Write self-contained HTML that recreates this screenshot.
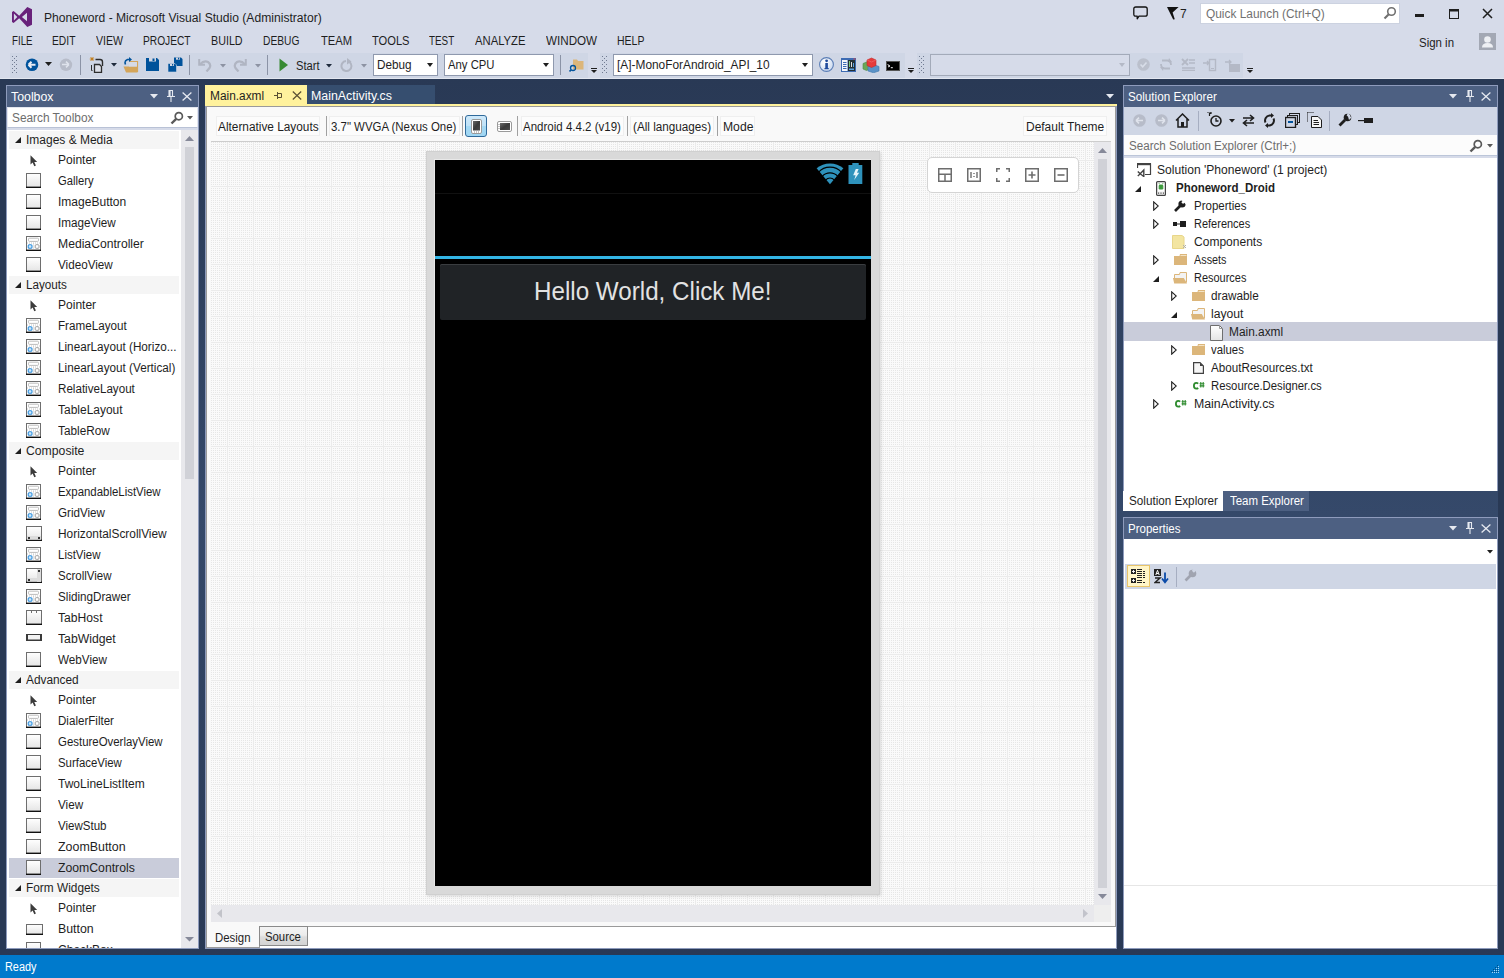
<!DOCTYPE html>
<html><head><meta charset="utf-8"><style>
html,body{margin:0;padding:0;width:1504px;height:978px;overflow:hidden;background:#293955;}
body{position:relative;font-family:"Liberation Sans", sans-serif;}
div{position:absolute;box-sizing:border-box;}
.t{position:absolute;font-family:"Liberation Sans", sans-serif;font-size:12px;line-height:16px;white-space:nowrap;}
</style></head><body>
<svg width="0" height="0" style="position:absolute"><defs><linearGradient id="gb" x1="0" y1="0" x2="0" y2="1"><stop offset="0" stop-color="#ffffff"/><stop offset="1" stop-color="#e4e4e4"/></linearGradient></defs></svg>
<div style="left:0px;top:0px;width:1504px;height:79px;background:#d6dbe9;"></div><div style="left:0px;top:78px;width:1504px;height:1px;background:#e3e7f0;"></div><div style="left:0px;top:79px;width:1504px;height:876px;background:#293955;"></div><div style="left:6px;top:79px;width:1492px;height:876px;background:linear-gradient(#293955 0%, #35496a 50%, #293955 100%);"></div><div style="left:0px;top:955px;width:1504px;height:23px;background:#007acc;"></div><svg style="position:absolute;left:12px;top:7px;" width="20" height="20" viewBox="0 0 20 20"><path d="M0 5 L1.6 4 L7.2 8.7 L15.3 0 L20 2.2 V17.8 L15.3 20 L7.2 11.3 L1.6 16 L0 15 Z M1.9 6.6 V13.4 L5.3 10 Z M9.9 10 L15 5.8 V14.2 Z" fill="#68217a" fill-rule="evenodd"/></svg><span class="t" style="left:44.3px;top:10px;color:#1e1e1e;transform:scaleX(1.0091);transform-origin:0 0;">Phoneword - Microsoft Visual Studio (Administrator)</span><span class="t" style="left:11.5px;top:33px;color:#1e1e1e;transform:scaleX(0.8094);transform-origin:0 0;">FILE</span><span class="t" style="left:52px;top:33px;color:#1e1e1e;transform:scaleX(0.8563);transform-origin:0 0;">EDIT</span><span class="t" style="left:95.7px;top:33px;color:#1e1e1e;transform:scaleX(0.8840);transform-origin:0 0;">VIEW</span><span class="t" style="left:143px;top:33px;color:#1e1e1e;transform:scaleX(0.8500);transform-origin:0 0;">PROJECT</span><span class="t" style="left:210.9px;top:33px;color:#1e1e1e;transform:scaleX(0.8941);transform-origin:0 0;">BUILD</span><span class="t" style="left:263.3px;top:33px;color:#1e1e1e;transform:scaleX(0.8530);transform-origin:0 0;">DEBUG</span><span class="t" style="left:320.5px;top:33px;color:#1e1e1e;transform:scaleX(0.9331);transform-origin:0 0;">TEAM</span><span class="t" style="left:371.8px;top:33px;color:#1e1e1e;transform:scaleX(0.9274);transform-origin:0 0;">TOOLS</span><span class="t" style="left:429.3px;top:33px;color:#1e1e1e;transform:scaleX(0.8220);transform-origin:0 0;">TEST</span><span class="t" style="left:475px;top:33px;color:#1e1e1e;transform:scaleX(0.9390);transform-origin:0 0;">ANALYZE</span><span class="t" style="left:545.7px;top:33px;color:#1e1e1e;transform:scaleX(0.9704);transform-origin:0 0;">WINDOW</span><span class="t" style="left:617.3px;top:33px;color:#1e1e1e;transform:scaleX(0.8742);transform-origin:0 0;">HELP</span><svg style="position:absolute;left:1133px;top:6px;" width="16" height="15" viewBox="0 0 16 15"><path d="M2.8 1 H12.2 Q14.2 1 14.2 3 V8.2 Q14.2 10.2 12.2 10.2 H6 L4.2 12.8 V10.2 H2.8 Q0.8 10.2 0.8 8.2 V3 Q0.8 1 2.8 1 Z" fill="none" stroke="#111" stroke-width="1.3" stroke-linejoin="round"/></svg><svg style="position:absolute;left:1167px;top:7px;" width="13" height="13" viewBox="0 0 13 13"><path d="M0 0 H11.6 L5.6 5.6 L7.8 12.3 L6.2 12.6 Z" fill="#111"/></svg><span class="t" style="left:1180px;top:6px;color:#1e1e1e;font-size:12px">7</span><div style="left:1200px;top:3px;width:200px;height:21px;background:#ffffff;border:1px solid #ccd2e0;"></div><span class="t" style="left:1205.5px;top:6px;color:#717171;transform:scaleX(0.9916);transform-origin:0 0;">Quick Launch (Ctrl+Q)</span><svg style="position:absolute;left:1383px;top:6px;" width="14" height="14" viewBox="0 0 14 14"><circle cx="8.5" cy="5.5" r="3.8" fill="none" stroke="#717171" stroke-width="1.6"/><path d="M6 8 L1.5 12.5" stroke="#717171" stroke-width="2.2"/></svg><div style="left:1415px;top:14px;width:9px;height:3px;background:#1e1e1e;"></div><svg style="position:absolute;left:1449px;top:9px;" width="10" height="10" viewBox="0 0 10 10"><rect x="0.5" y="0.5" width="9" height="9" fill="none" stroke="#1e1e1e" stroke-width="1"/><rect x="0" y="0" width="10" height="2.5" fill="#1e1e1e"/></svg><svg style="position:absolute;left:1482px;top:8px;" width="11" height="11" viewBox="0 0 11 11"><path d="M1 1 L10 10 M10 1 L1 10" stroke="#1e1e1e" stroke-width="1.5"/></svg><span class="t" style="left:1419px;top:35px;color:#1e1e1e;transform:scaleX(0.9540);transform-origin:0 0;">Sign in</span><div style="left:1479px;top:33px;width:17px;height:17px;background:#a3a8b4;"></div><svg style="position:absolute;left:1479px;top:33px;" width="17" height="17" viewBox="0 0 17 17"><circle cx="8.5" cy="6.5" r="3.3" fill="#eef0f4"/><path d="M3 14.5 Q3 10 8.5 10 Q14 10 14 14.5 Z" fill="#eef0f4"/></svg><div style="left:10px;top:53px;width:1246px;height:25px;background:#cfd6e5;"></div><svg style="position:absolute;left:12px;top:56px;" width="5" height="17" viewBox="0 0 5 17"><rect x="0" y="0" width="1" height="1" fill="#6f7a91"/><rect x="4" y="0" width="1" height="1" fill="#6f7a91"/><rect x="2" y="2" width="1" height="1" fill="#6f7a91"/><rect x="0" y="4" width="1" height="1" fill="#6f7a91"/><rect x="4" y="4" width="1" height="1" fill="#6f7a91"/><rect x="2" y="6" width="1" height="1" fill="#6f7a91"/><rect x="0" y="8" width="1" height="1" fill="#6f7a91"/><rect x="4" y="8" width="1" height="1" fill="#6f7a91"/><rect x="2" y="10" width="1" height="1" fill="#6f7a91"/><rect x="0" y="12" width="1" height="1" fill="#6f7a91"/><rect x="4" y="12" width="1" height="1" fill="#6f7a91"/><rect x="2" y="14" width="1" height="1" fill="#6f7a91"/><rect x="0" y="16" width="1" height="1" fill="#6f7a91"/><rect x="4" y="16" width="1" height="1" fill="#6f7a91"/></svg><div style="left:80px;top:55px;width:1px;height:20px;background:#8b93a6;"></div><div style="left:189px;top:55px;width:1px;height:20px;background:#8b93a6;"></div><div style="left:267px;top:55px;width:1px;height:20px;background:#8b93a6;"></div><svg style="position:absolute;left:25px;top:58px;" width="14" height="14" viewBox="0 0 14 14"><circle cx="7" cy="6.8" r="6.3" fill="#00539c"/><path d="M3.5 6.8 H10.5 M3.5 6.8 L6.5 3.8 M3.5 6.8 L6.5 9.8" stroke="#e8ecf4" stroke-width="2" fill="none"/></svg><svg style="position:absolute;left:45px;top:62px;" width="7" height="4" viewBox="0 0 7 4"><path d="M0 0 H7 L3.5 4 Z" fill="#1e1e1e"/></svg><svg style="position:absolute;left:59px;top:58px;" width="14" height="14" viewBox="0 0 14 14"><circle cx="7" cy="6.8" r="6.2" fill="#b7bcc9"/><path d="M10 6.5 H3 M10 6.5 L7 3.6 M10 6.5 L7 9.4" stroke="#dfe3ec" stroke-width="1.6" fill="none"/></svg><svg style="position:absolute;left:89px;top:57px;" width="16" height="16" viewBox="0 0 16 16"><path d="M1.5 0.5 L4.5 3.5 M4.5 0.5 L1.5 3.5 M3 0 V4 M0.8 2 H5.2" stroke="#c27d1a" stroke-width="0.9"/><path d="M6.5 2.5 H11 Q13.5 2.5 13.5 5 V9" fill="none" stroke="#2d2d2d" stroke-width="1.4"/><path d="M5.5 7.5 H10.5 L12.5 9.5 V15.5 H5.5 Z" fill="#dcdfe8" stroke="#2d2d2d" stroke-width="1.3"/><path d="M2.5 8 V13.5 H3.5" fill="none" stroke="#2d2d2d" stroke-width="1"/></svg><svg style="position:absolute;left:111px;top:63px;" width="6" height="4" viewBox="0 0 6 4"><path d="M0 0 H6 L3 3.5 Z" fill="#1e2a3c"/></svg><svg style="position:absolute;left:123px;top:57px;" width="16" height="16" viewBox="0 0 16 16"><path d="M0.5 9.5 H14.5 V15.5 H3 Z" fill="#d4a55a"/><path d="M6.5 4.5 H14.5 V15" fill="none" stroke="#d4a55a" stroke-width="1.2"/><rect x="6" y="5" width="8" height="4.5" fill="#d6dae6"/><path d="M2.5 7.5 Q1 4 4.5 2.5 H7" fill="none" stroke="#00539c" stroke-width="1.6"/><path d="M6 0 L9 2.5 L6 5 Z" fill="#00539c"/></svg><svg style="position:absolute;left:146px;top:58px;" width="13" height="13" viewBox="0 0 13 13"><path d="M0 0 H11 L13 2 V13 H0 Z" fill="#00529b"/><rect x="3" y="0" width="7" height="3.5" fill="#d2d6e2"/><rect x="6.5" y="0.5" width="2" height="2.5" fill="#00529b"/></svg><svg style="position:absolute;left:167px;top:57px;" width="16" height="16" viewBox="0 0 16 16"><path d="M7 0.5 H14 L15.5 2 V9 H7 Z" fill="#00529b"/><rect x="9" y="0.5" width="4" height="2.2" fill="#d2d6e2"/><rect x="11" y="0.8" width="1.2" height="1.6" fill="#00529b"/><path d="M6.5 8 L7.5 7" stroke="#d2d6e2"/><path d="M1 6.5 H8 L9.5 8 V15 H1 Z" fill="#00529b" stroke="#cfd6e5" stroke-width="0.6"/><rect x="3" y="6.8" width="4" height="2.2" fill="#d2d6e2"/><rect x="5" y="7" width="1.2" height="1.6" fill="#00529b"/></svg><svg style="position:absolute;left:198px;top:58px;" width="14" height="14" viewBox="0 0 14 14"><path d="M1.2 1 V6.8 H7" stroke="#b0b5c2" stroke-width="2" fill="none"/><path d="M1.8 6.5 Q6 2 10 4 Q13.5 6.5 11.5 10 L8.5 13.5" stroke="#b0b5c2" stroke-width="2.2" fill="none"/></svg><svg style="position:absolute;left:220px;top:64px;" width="6" height="4" viewBox="0 0 6 4"><path d="M0 0 H6 L3 3.5 Z" fill="#8d93a3"/></svg><svg style="position:absolute;left:233px;top:58px;" width="14" height="14" viewBox="0 0 14 14"><path d="M12.8 1 V6.8 H7" stroke="#b0b5c2" stroke-width="2" fill="none"/><path d="M12.2 6.5 Q8 2 4 4 Q0.5 6.5 2.5 10 L5.5 13.5" stroke="#b0b5c2" stroke-width="2.2" fill="none"/></svg><svg style="position:absolute;left:255px;top:64px;" width="6" height="4" viewBox="0 0 6 4"><path d="M0 0 H6 L3 3.5 Z" fill="#8d93a3"/></svg><svg style="position:absolute;left:279px;top:58px;" width="10" height="14" viewBox="0 0 10 14"><path d="M0.5 0.5 L9 7 L0.5 13.5 Z" fill="#388a34"/></svg><span class="t" style="left:296px;top:58px;color:#1e1e1e;transform:scaleX(0.9318);transform-origin:0 0;">Start</span><svg style="position:absolute;left:326px;top:64px;" width="6" height="4" viewBox="0 0 6 4"><path d="M0 0 H6 L3 3.5 Z" fill="#1e2a3c"/></svg><svg style="position:absolute;left:340px;top:58px;" width="13" height="14" viewBox="0 0 13 14"><path d="M9.5 4 A5 5 0 1 1 6 3" stroke="#b0b5c2" stroke-width="2" fill="none"/><path d="M7 0 L11.5 3.5 L7 6.5 Z" fill="#b0b5c2"/></svg><svg style="position:absolute;left:361px;top:64px;" width="6" height="4" viewBox="0 0 6 4"><path d="M0 0 H6 L3 3.5 Z" fill="#8d93a3"/></svg><div style="left:373px;top:54px;width:65px;height:22px;background:#ffffff;border:1px solid #8f99ae;"></div><span class="t" style="left:377.2px;top:57px;color:#1e1e1e;transform:scaleX(0.9785);transform-origin:0 0;">Debug</span><svg style="position:absolute;left:427px;top:63px;" width="6" height="4" viewBox="0 0 6 4"><path d="M0 0 H6 L3 4 Z" fill="#1e1e1e"/></svg><div style="left:444px;top:54px;width:110px;height:22px;background:#ffffff;border:1px solid #8f99ae;"></div><span class="t" style="left:448.2px;top:57px;color:#1e1e1e;transform:scaleX(0.9424);transform-origin:0 0;">Any CPU</span><svg style="position:absolute;left:543px;top:63px;" width="6" height="4" viewBox="0 0 6 4"><path d="M0 0 H6 L3 4 Z" fill="#1e1e1e"/></svg><div style="left:560px;top:55px;width:1px;height:20px;background:#8b93a6;"></div><div style="left:588px;top:53px;width:12px;height:25px;background:#d6dbe9;"></div><svg style="position:absolute;left:569px;top:58px;" width="16" height="15" viewBox="0 0 16 15"><path d="M4 1.5 H8 L9 3 H14.5 V11.5 H4 Z" fill="#dcb67a"/><circle cx="4" cy="10" r="2.5" fill="none" stroke="#00539c" stroke-width="1.3"/><path d="M2.3 11.7 L0.5 13.5" stroke="#00539c" stroke-width="1.6"/></svg><svg style="position:absolute;left:591px;top:68px;" width="6" height="6" viewBox="0 0 6 6"><rect x="0" y="0" width="6" height="1" fill="#1e1e1e"/><path d="M0 2 H6 L3 5 Z" fill="#1e1e1e"/></svg><svg style="position:absolute;left:602px;top:56px;" width="5" height="17" viewBox="0 0 5 17"><rect x="0" y="0" width="1" height="1" fill="#6f7a91"/><rect x="4" y="0" width="1" height="1" fill="#6f7a91"/><rect x="2" y="2" width="1" height="1" fill="#6f7a91"/><rect x="0" y="4" width="1" height="1" fill="#6f7a91"/><rect x="4" y="4" width="1" height="1" fill="#6f7a91"/><rect x="2" y="6" width="1" height="1" fill="#6f7a91"/><rect x="0" y="8" width="1" height="1" fill="#6f7a91"/><rect x="4" y="8" width="1" height="1" fill="#6f7a91"/><rect x="2" y="10" width="1" height="1" fill="#6f7a91"/><rect x="0" y="12" width="1" height="1" fill="#6f7a91"/><rect x="4" y="12" width="1" height="1" fill="#6f7a91"/><rect x="2" y="14" width="1" height="1" fill="#6f7a91"/><rect x="0" y="16" width="1" height="1" fill="#6f7a91"/><rect x="4" y="16" width="1" height="1" fill="#6f7a91"/></svg><div style="left:613px;top:54px;width:200px;height:22px;background:#ffffff;border:1px solid #8f99ae;"></div><span class="t" style="left:617.2px;top:57px;color:#1e1e1e;transform:scaleX(0.9900);transform-origin:0 0;">[A]-MonoForAndroid_API_10</span><svg style="position:absolute;left:802px;top:63px;" width="6" height="4" viewBox="0 0 6 4"><path d="M0 0 H6 L3 4 Z" fill="#1e1e1e"/></svg><svg style="position:absolute;left:819px;top:57px;" width="15" height="15" viewBox="0 0 15 15"><defs><radialGradient id="ig" cx="0.35" cy="0.3" r="0.8"><stop offset="0" stop-color="#ffffff"/><stop offset="1" stop-color="#c9d8ef"/></radialGradient></defs><circle cx="7.5" cy="7.5" r="6.9" fill="url(#ig)" stroke="#5a7db5" stroke-width="1.1"/><rect x="6.3" y="6" width="2.6" height="6" fill="#1f4a9c"/><rect x="5.5" y="11" width="4.2" height="1.2" fill="#1f4a9c"/><circle cx="7.6" cy="3.8" r="1.4" fill="#1f4a9c"/></svg><svg style="position:absolute;left:841px;top:58px;" width="15" height="14" viewBox="0 0 15 14"><rect x="0" y="0" width="15" height="14" fill="#3d6bb3"/><rect x="1" y="2" width="5.5" height="11" fill="#f4f6fa"/><rect x="7" y="2" width="7" height="11" fill="#243036"/><path d="M2 4.5 H5.5 M2 6.5 H5.5 M2 8.5 H5.5 M2 10.5 H5.5" stroke="#3d6bb3" stroke-width="1"/><rect x="8" y="3" width="1" height="6" fill="#7bc67b"/><rect x="10" y="4" width="1" height="5" fill="#e0e0e0"/><rect x="12" y="5" width="1" height="4" fill="#5aa0e0"/><rect x="8" y="10.5" width="5" height="1.5" fill="#5aa0e0"/><rect x="12.5" y="0.5" width="2" height="1" fill="#e04040"/></svg><svg style="position:absolute;left:862px;top:57px;" width="18" height="16" viewBox="0 0 18 16"><path d="M1 6.5 L4.5 5 L8 6.5 V12 L4.5 13.5 L1 12 Z" fill="#6aa85a" stroke="#4e8a44" stroke-width="0.6"/><path d="M6 9.5 L11.5 7.5 L17 9.5 V14 L11.5 15.8 L6 14 Z" fill="#5b93c8" stroke="#3f78ad" stroke-width="0.6"/><path d="M5 3 L9.5 1 L14 3 V8.5 L9.5 10.5 L5 8.5 Z" fill="#e63b3b" stroke="#c22a2a" stroke-width="0.6"/><path d="M5 3 L9.5 5 L14 3" fill="none" stroke="#f07070" stroke-width="0.6"/></svg><svg style="position:absolute;left:886px;top:61px;" width="14" height="10" viewBox="0 0 14 10"><rect x="0.5" y="0.5" width="13" height="9" fill="#000" stroke="#555"/><path d="M2 4 L4 5 L2 6" stroke="#fff" stroke-width="0.9" fill="none"/><rect x="4.8" y="6.2" width="2" height="1" fill="#fff"/><rect x="1.5" y="3.2" width="0.8" height="0.8" fill="#fff"/></svg><div style="left:905px;top:53px;width:12px;height:25px;background:#d6dbe9;"></div><svg style="position:absolute;left:908px;top:68px;" width="6" height="6" viewBox="0 0 6 6"><rect x="0" y="0" width="6" height="1" fill="#1e1e1e"/><path d="M0 2 H6 L3 5 Z" fill="#1e1e1e"/></svg><svg style="position:absolute;left:919px;top:56px;" width="5" height="17" viewBox="0 0 5 17"><rect x="0" y="0" width="1" height="1" fill="#6f7a91"/><rect x="4" y="0" width="1" height="1" fill="#6f7a91"/><rect x="2" y="2" width="1" height="1" fill="#6f7a91"/><rect x="0" y="4" width="1" height="1" fill="#6f7a91"/><rect x="4" y="4" width="1" height="1" fill="#6f7a91"/><rect x="2" y="6" width="1" height="1" fill="#6f7a91"/><rect x="0" y="8" width="1" height="1" fill="#6f7a91"/><rect x="4" y="8" width="1" height="1" fill="#6f7a91"/><rect x="2" y="10" width="1" height="1" fill="#6f7a91"/><rect x="0" y="12" width="1" height="1" fill="#6f7a91"/><rect x="4" y="12" width="1" height="1" fill="#6f7a91"/><rect x="2" y="14" width="1" height="1" fill="#6f7a91"/><rect x="0" y="16" width="1" height="1" fill="#6f7a91"/><rect x="4" y="16" width="1" height="1" fill="#6f7a91"/></svg><div style="left:930px;top:54px;width:200px;height:22px;background:#d6dbe9;border:1px solid #a3aab9;"></div><svg style="position:absolute;left:1119px;top:63px;" width="6" height="4" viewBox="0 0 6 4"><path d="M0 0 H6 L3 4 Z" fill="#b4b9c6"/></svg><svg style="position:absolute;left:1137px;top:58px;" width="13" height="13" viewBox="0 0 13 13"><circle cx="6.5" cy="6.5" r="6.3" fill="#bbc0cc"/><path d="M3.5 6.5 L5.7 8.8 L9.5 4.5" stroke="#d8dde8" stroke-width="1.6" fill="none"/></svg><svg style="position:absolute;left:1159px;top:58px;" width="14" height="13" viewBox="0 0 14 13"><path d="M3 2.5 H8 Q12 2.5 12 7 M11 10.5 H6 Q2 10.5 2 6" stroke="#b4b9c6" stroke-width="1.8" fill="none"/><path d="M10 0 L13 4 L9 4Z M4 13 L1 9 L5 9 Z" fill="#b4b9c6"/></svg><svg style="position:absolute;left:1181px;top:58px;" width="14" height="13" viewBox="0 0 14 13"><path d="M1 1 L7 7 M7 1 L1 7" stroke="#b4b9c6" stroke-width="1.8"/><path d="M8 2 H14 M8 5 H14 M1 10 H14 M1 12.5 H14" stroke="#b4b9c6" stroke-width="1.6"/></svg><svg style="position:absolute;left:1203px;top:57px;" width="14" height="15" viewBox="0 0 14 15"><rect x="6.5" y="2.5" width="6" height="11" fill="none" stroke="#b4b9c6" stroke-width="1.4"/><path d="M0 6 H6 M4 4 L6 6 L4 8" stroke="#b4b9c6" stroke-width="1.3" fill="none"/><rect x="8" y="11" width="3" height="1" fill="#b4b9c6"/></svg><svg style="position:absolute;left:1225px;top:57px;" width="15" height="15" viewBox="0 0 15 15"><rect x="4" y="7" width="11" height="8" fill="#b4b9c6"/><path d="M0 5 H6 M4 3 L6 5 L4 7" stroke="#b4b9c6" stroke-width="1.3" fill="none"/></svg><div style="left:1243px;top:53px;width:13px;height:25px;background:#d6dbe9;"></div><svg style="position:absolute;left:1247px;top:68px;" width="6" height="6" viewBox="0 0 6 6"><rect x="0" y="0" width="6" height="1" fill="#1e1e1e"/><path d="M0 2 H6 L3 5 Z" fill="#1e1e1e"/></svg><div style="left:6px;top:85px;width:193px;height:864px;background:#8e9bbc;"></div><div style="left:6px;top:85px;width:193px;height:1px;background:#8e9bbc;"></div><div style="left:7px;top:86px;width:191px;height:21px;background:#4d6082;"></div><span class="t" style="left:11.2px;top:89px;color:#ffffff;transform:scaleX(1.0276);transform-origin:0 0;">Toolbox</span><svg style="position:absolute;left:150px;top:94px;" width="8" height="5" viewBox="0 0 8 5"><path d="M0 0 H8 L4 4.5 Z" fill="#e6e9f0"/></svg><svg style="position:absolute;left:167px;top:90px;" width="8" height="12" viewBox="0 0 8 12"><path d="M2 0.5 V6.5 M1.5 0.5 H6 M5.5 0.5 V6.5 M0 6.5 H8 M4 6.5 V12" stroke="#e6e9f0" stroke-width="1.1" fill="none"/><rect x="2" y="1" width="1.6" height="5.5" fill="#e6e9f0"/></svg><svg style="position:absolute;left:182px;top:92px;" width="10" height="9" viewBox="0 0 10 9"><path d="M0.6 0.6 L9.4 8.4 M9.4 0.6 L0.6 8.4" stroke="#e6e9f0" stroke-width="1.3"/></svg><div style="left:7px;top:107px;width:191px;height:841px;background:#ffffff;"></div><div style="left:7px;top:107px;width:191px;height:21px;background:#ffffff;border:1px solid #e3e6ef;border-bottom-color:#b9c2d6;"></div><span class="t" style="left:11.8px;top:110px;color:#6d6d6d;transform:scaleX(0.9869);transform-origin:0 0;">Search Toolbox</span><svg style="position:absolute;left:170px;top:111px;" width="14" height="14" viewBox="0 0 14 14"><circle cx="8.8" cy="5.2" r="3.6" fill="none" stroke="#595959" stroke-width="1.7"/><path d="M6.2 7.8 L1.5 12.5" stroke="#595959" stroke-width="2.4"/></svg><svg style="position:absolute;left:187px;top:116px;" width="6" height="4" viewBox="0 0 6 4"><path d="M0 0 H6 L3 3.5 Z" fill="#595959"/></svg><div style="left:7px;top:128px;width:191px;height:2px;background:#d6dbe9;"></div><div style="left:181px;top:130px;width:17px;height:818px;background:#e8e8ec;"></div><svg style="position:absolute;left:185px;top:136px;" width="9" height="5" viewBox="0 0 9 5"><path d="M0 5 L4.5 0 L9 5 Z" fill="#868999"/></svg><div style="left:185px;top:147px;width:9px;height:332px;background:#d0d1d7;"></div><svg style="position:absolute;left:185px;top:937px;" width="9" height="5" viewBox="0 0 9 5"><path d="M0 0 L4.5 4.5 L9 0 Z" fill="#868999"/></svg><div style="left:7px;top:130px;width:174px;height:818px;overflow:hidden;"><div style="left:2px;top:1px;width:170px;height:18px;background:#f5f5f5"></div><svg style="position:absolute;left:8px;top:7px" width="6" height="6"><path d="M6 0 V6 H0 Z" fill="#1e1e1e"/></svg><span class="t" style="left:18.8px;top:2px;color:#1e1e1e;transform:scaleX(0.9990);transform-origin:0 0;">Images &amp; Media</span><svg style="position:absolute;left:23px;top:25px;" width="9" height="12" viewBox="0 0 9 12"><path d="M0.5 0.3 V9.5 L2.6 7.6 L4.3 11.3 L5.9 10.6 L4.3 7 L7.2 7 Z" fill="#3c3c3c"/></svg><span class="t" style="left:51.1px;top:22px;color:#1e1e1e;transform:scaleX(1.0022);transform-origin:0 0;">Pointer</span><svg style="position:absolute;left:19px;top:43px;" width="15" height="15" viewBox="0 0 15 15"><rect x="0.5" y="0.5" width="14" height="14" fill="url(#gb)" stroke="#6e6e6e"/><rect x="0" y="13.6" width="15" height="1.4" fill="#111"/></svg><span class="t" style="left:51.1px;top:43px;color:#1e1e1e;transform:scaleX(0.9365);transform-origin:0 0;">Gallery</span><svg style="position:absolute;left:19px;top:64px;" width="15" height="15" viewBox="0 0 15 15"><rect x="0.5" y="0.5" width="14" height="14" fill="url(#gb)" stroke="#6e6e6e"/><rect x="0" y="13.6" width="15" height="1.4" fill="#111"/></svg><span class="t" style="left:51.1px;top:64px;color:#1e1e1e;transform:scaleX(1.0027);transform-origin:0 0;">ImageButton</span><svg style="position:absolute;left:19px;top:85px;" width="15" height="15" viewBox="0 0 15 15"><rect x="0.5" y="0.5" width="14" height="14" fill="url(#gb)" stroke="#6e6e6e"/><rect x="0" y="13.6" width="15" height="1.4" fill="#111"/></svg><span class="t" style="left:51.1px;top:85px;color:#1e1e1e;transform:scaleX(0.9756);transform-origin:0 0;">ImageView</span><svg style="position:absolute;left:19px;top:106px;" width="15" height="15" viewBox="0 0 15 15"><rect x="0.5" y="0.5" width="14" height="14" fill="#fff" stroke="#6e6e6e"/><rect x="0" y="13.6" width="15" height="1.4" fill="#111"/><rect x="2.5" y="2.2" width="10" height="3.2" rx="1" fill="#fff" stroke="#b4b4b4" stroke-width="0.9"/><path d="M1 7 H14" stroke="#b8b8b8" stroke-width="0.8" stroke-dasharray="1 1"/><path d="M7.5 7.5 V13" stroke="#b8b8b8" stroke-width="0.8" stroke-dasharray="1 1"/><rect x="2.2" y="8.7" width="3.8" height="3.6" rx="1" fill="#cfe8fb" stroke="#2f8fdc" stroke-width="1.1"/><rect x="9.2" y="8.7" width="3.8" height="3.6" rx="1" fill="#fff" stroke="#9a9a9a" stroke-width="1"/></svg><span class="t" style="left:51.1px;top:106px;color:#1e1e1e;transform:scaleX(1.0139);transform-origin:0 0;">MediaController</span><svg style="position:absolute;left:19px;top:127px;" width="15" height="15" viewBox="0 0 15 15"><rect x="0.5" y="0.5" width="14" height="14" fill="url(#gb)" stroke="#6e6e6e"/><rect x="0" y="13.6" width="15" height="1.4" fill="#111"/></svg><span class="t" style="left:51.1px;top:127px;color:#1e1e1e;transform:scaleX(0.9740);transform-origin:0 0;">VideoView</span><div style="left:2px;top:146px;width:170px;height:18px;background:#f5f5f5"></div><svg style="position:absolute;left:8px;top:152px" width="6" height="6"><path d="M6 0 V6 H0 Z" fill="#1e1e1e"/></svg><span class="t" style="left:18.8px;top:147px;color:#1e1e1e;transform:scaleX(0.9734);transform-origin:0 0;">Layouts</span><svg style="position:absolute;left:23px;top:170px;" width="9" height="12" viewBox="0 0 9 12"><path d="M0.5 0.3 V9.5 L2.6 7.6 L4.3 11.3 L5.9 10.6 L4.3 7 L7.2 7 Z" fill="#3c3c3c"/></svg><span class="t" style="left:51.1px;top:167px;color:#1e1e1e;transform:scaleX(1.0022);transform-origin:0 0;">Pointer</span><svg style="position:absolute;left:19px;top:188px;" width="15" height="15" viewBox="0 0 15 15"><rect x="0.5" y="0.5" width="14" height="14" fill="#fff" stroke="#6e6e6e"/><rect x="0" y="13.6" width="15" height="1.4" fill="#111"/><rect x="2.5" y="2.2" width="10" height="3.2" rx="1" fill="#fff" stroke="#b4b4b4" stroke-width="0.9"/><path d="M1 7 H14" stroke="#b8b8b8" stroke-width="0.8" stroke-dasharray="1 1"/><path d="M7.5 7.5 V13" stroke="#b8b8b8" stroke-width="0.8" stroke-dasharray="1 1"/><rect x="2.2" y="8.7" width="3.8" height="3.6" rx="1" fill="#cfe8fb" stroke="#2f8fdc" stroke-width="1.1"/><rect x="9.2" y="8.7" width="3.8" height="3.6" rx="1" fill="#fff" stroke="#9a9a9a" stroke-width="1"/></svg><span class="t" style="left:51.1px;top:188px;color:#1e1e1e;transform:scaleX(0.9719);transform-origin:0 0;">FrameLayout</span><svg style="position:absolute;left:19px;top:209px;" width="15" height="15" viewBox="0 0 15 15"><rect x="0.5" y="0.5" width="14" height="14" fill="#fff" stroke="#6e6e6e"/><rect x="0" y="13.6" width="15" height="1.4" fill="#111"/><rect x="2.5" y="2.2" width="10" height="3.2" rx="1" fill="#fff" stroke="#b4b4b4" stroke-width="0.9"/><path d="M1 7 H14" stroke="#b8b8b8" stroke-width="0.8" stroke-dasharray="1 1"/><path d="M7.5 7.5 V13" stroke="#b8b8b8" stroke-width="0.8" stroke-dasharray="1 1"/><rect x="2.2" y="8.7" width="3.8" height="3.6" rx="1" fill="#cfe8fb" stroke="#2f8fdc" stroke-width="1.1"/><rect x="9.2" y="8.7" width="3.8" height="3.6" rx="1" fill="#fff" stroke="#9a9a9a" stroke-width="1"/></svg><span class="t" style="left:51.1px;top:209px;color:#1e1e1e;transform:scaleX(0.9763);transform-origin:0 0;">LinearLayout (Horizo...</span><svg style="position:absolute;left:19px;top:230px;" width="15" height="15" viewBox="0 0 15 15"><rect x="0.5" y="0.5" width="14" height="14" fill="#fff" stroke="#6e6e6e"/><rect x="0" y="13.6" width="15" height="1.4" fill="#111"/><rect x="2.5" y="2.2" width="10" height="3.2" rx="1" fill="#fff" stroke="#b4b4b4" stroke-width="0.9"/><path d="M1 7 H14" stroke="#b8b8b8" stroke-width="0.8" stroke-dasharray="1 1"/><path d="M7.5 7.5 V13" stroke="#b8b8b8" stroke-width="0.8" stroke-dasharray="1 1"/><rect x="2.2" y="8.7" width="3.8" height="3.6" rx="1" fill="#cfe8fb" stroke="#2f8fdc" stroke-width="1.1"/><rect x="9.2" y="8.7" width="3.8" height="3.6" rx="1" fill="#fff" stroke="#9a9a9a" stroke-width="1"/></svg><span class="t" style="left:51.1px;top:230px;color:#1e1e1e;transform:scaleX(0.9770);transform-origin:0 0;">LinearLayout (Vertical)</span><svg style="position:absolute;left:19px;top:251px;" width="15" height="15" viewBox="0 0 15 15"><rect x="0.5" y="0.5" width="14" height="14" fill="#fff" stroke="#6e6e6e"/><rect x="0" y="13.6" width="15" height="1.4" fill="#111"/><rect x="2.5" y="2.2" width="10" height="3.2" rx="1" fill="#fff" stroke="#b4b4b4" stroke-width="0.9"/><path d="M1 7 H14" stroke="#b8b8b8" stroke-width="0.8" stroke-dasharray="1 1"/><path d="M7.5 7.5 V13" stroke="#b8b8b8" stroke-width="0.8" stroke-dasharray="1 1"/><rect x="2.2" y="8.7" width="3.8" height="3.6" rx="1" fill="#cfe8fb" stroke="#2f8fdc" stroke-width="1.1"/><rect x="9.2" y="8.7" width="3.8" height="3.6" rx="1" fill="#fff" stroke="#9a9a9a" stroke-width="1"/></svg><span class="t" style="left:51.1px;top:251px;color:#1e1e1e;transform:scaleX(0.9676);transform-origin:0 0;">RelativeLayout</span><svg style="position:absolute;left:19px;top:272px;" width="15" height="15" viewBox="0 0 15 15"><rect x="0.5" y="0.5" width="14" height="14" fill="#fff" stroke="#6e6e6e"/><rect x="0" y="13.6" width="15" height="1.4" fill="#111"/><rect x="2.5" y="2.2" width="10" height="3.2" rx="1" fill="#fff" stroke="#b4b4b4" stroke-width="0.9"/><path d="M1 7 H14" stroke="#b8b8b8" stroke-width="0.8" stroke-dasharray="1 1"/><path d="M7.5 7.5 V13" stroke="#b8b8b8" stroke-width="0.8" stroke-dasharray="1 1"/><rect x="2.2" y="8.7" width="3.8" height="3.6" rx="1" fill="#cfe8fb" stroke="#2f8fdc" stroke-width="1.1"/><rect x="9.2" y="8.7" width="3.8" height="3.6" rx="1" fill="#fff" stroke="#9a9a9a" stroke-width="1"/></svg><span class="t" style="left:51.1px;top:272px;color:#1e1e1e;transform:scaleX(0.9984);transform-origin:0 0;">TableLayout</span><svg style="position:absolute;left:19px;top:293px;" width="15" height="15" viewBox="0 0 15 15"><rect x="0.5" y="0.5" width="14" height="14" fill="#fff" stroke="#6e6e6e"/><rect x="0" y="13.6" width="15" height="1.4" fill="#111"/><rect x="2.5" y="2.2" width="10" height="3.2" rx="1" fill="#fff" stroke="#b4b4b4" stroke-width="0.9"/><path d="M1 7 H14" stroke="#b8b8b8" stroke-width="0.8" stroke-dasharray="1 1"/><path d="M7.5 7.5 V13" stroke="#b8b8b8" stroke-width="0.8" stroke-dasharray="1 1"/><rect x="2.2" y="8.7" width="3.8" height="3.6" rx="1" fill="#cfe8fb" stroke="#2f8fdc" stroke-width="1.1"/><rect x="9.2" y="8.7" width="3.8" height="3.6" rx="1" fill="#fff" stroke="#9a9a9a" stroke-width="1"/></svg><span class="t" style="left:51.1px;top:293px;color:#1e1e1e;transform:scaleX(0.9829);transform-origin:0 0;">TableRow</span><div style="left:2px;top:312px;width:170px;height:18px;background:#f5f5f5"></div><svg style="position:absolute;left:8px;top:318px" width="6" height="6"><path d="M6 0 V6 H0 Z" fill="#1e1e1e"/></svg><span class="t" style="left:18.8px;top:313px;color:#1e1e1e;transform:scaleX(1.0181);transform-origin:0 0;">Composite</span><svg style="position:absolute;left:23px;top:336px;" width="9" height="12" viewBox="0 0 9 12"><path d="M0.5 0.3 V9.5 L2.6 7.6 L4.3 11.3 L5.9 10.6 L4.3 7 L7.2 7 Z" fill="#3c3c3c"/></svg><span class="t" style="left:51.1px;top:333px;color:#1e1e1e;transform:scaleX(1.0022);transform-origin:0 0;">Pointer</span><svg style="position:absolute;left:19px;top:354px;" width="15" height="15" viewBox="0 0 15 15"><rect x="0.5" y="0.5" width="14" height="14" fill="#fff" stroke="#6e6e6e"/><rect x="0" y="13.6" width="15" height="1.4" fill="#111"/><rect x="2.5" y="2.2" width="10" height="3.2" rx="1" fill="#fff" stroke="#b4b4b4" stroke-width="0.9"/><path d="M1 7 H14" stroke="#b8b8b8" stroke-width="0.8" stroke-dasharray="1 1"/><path d="M7.5 7.5 V13" stroke="#b8b8b8" stroke-width="0.8" stroke-dasharray="1 1"/><rect x="2.2" y="8.7" width="3.8" height="3.6" rx="1" fill="#cfe8fb" stroke="#2f8fdc" stroke-width="1.1"/><rect x="9.2" y="8.7" width="3.8" height="3.6" rx="1" fill="#fff" stroke="#9a9a9a" stroke-width="1"/></svg><span class="t" style="left:51.1px;top:354px;color:#1e1e1e;transform:scaleX(0.9514);transform-origin:0 0;">ExpandableListView</span><svg style="position:absolute;left:19px;top:375px;" width="15" height="15" viewBox="0 0 15 15"><rect x="0.5" y="0.5" width="14" height="14" fill="#fff" stroke="#6e6e6e"/><rect x="0" y="13.6" width="15" height="1.4" fill="#111"/><rect x="2.5" y="2.2" width="10" height="3.2" rx="1" fill="#fff" stroke="#b4b4b4" stroke-width="0.9"/><path d="M1 7 H14" stroke="#b8b8b8" stroke-width="0.8" stroke-dasharray="1 1"/><path d="M7.5 7.5 V13" stroke="#b8b8b8" stroke-width="0.8" stroke-dasharray="1 1"/><rect x="2.2" y="8.7" width="3.8" height="3.6" rx="1" fill="#cfe8fb" stroke="#2f8fdc" stroke-width="1.1"/><rect x="9.2" y="8.7" width="3.8" height="3.6" rx="1" fill="#fff" stroke="#9a9a9a" stroke-width="1"/></svg><span class="t" style="left:51.1px;top:375px;color:#1e1e1e;transform:scaleX(0.9676);transform-origin:0 0;">GridView</span><svg style="position:absolute;left:19px;top:396px;" width="16" height="15" viewBox="0 0 16 15"><rect x="0.5" y="0.5" width="15" height="14" fill="url(#gb)" stroke="#6e6e6e"/><rect x="0" y="13.6" width="16" height="1.4" fill="#111"/><rect x="1" y="10" width="14" height="3.6" fill="#dcdcdc"/><rect x="2" y="11" width="2" height="2" fill="#333"/><rect x="12" y="11" width="2" height="2" fill="#333"/></svg><span class="t" style="left:51.1px;top:396px;color:#1e1e1e;transform:scaleX(0.9896);transform-origin:0 0;">HorizontalScrollView</span><svg style="position:absolute;left:19px;top:417px;" width="15" height="15" viewBox="0 0 15 15"><rect x="0.5" y="0.5" width="14" height="14" fill="#fff" stroke="#6e6e6e"/><rect x="0" y="13.6" width="15" height="1.4" fill="#111"/><rect x="2.5" y="2.2" width="10" height="3.2" rx="1" fill="#fff" stroke="#b4b4b4" stroke-width="0.9"/><path d="M1 7 H14" stroke="#b8b8b8" stroke-width="0.8" stroke-dasharray="1 1"/><path d="M7.5 7.5 V13" stroke="#b8b8b8" stroke-width="0.8" stroke-dasharray="1 1"/><rect x="2.2" y="8.7" width="3.8" height="3.6" rx="1" fill="#cfe8fb" stroke="#2f8fdc" stroke-width="1.1"/><rect x="9.2" y="8.7" width="3.8" height="3.6" rx="1" fill="#fff" stroke="#9a9a9a" stroke-width="1"/></svg><span class="t" style="left:51.1px;top:417px;color:#1e1e1e;transform:scaleX(0.9557);transform-origin:0 0;">ListView</span><svg style="position:absolute;left:19px;top:438px;" width="16" height="15" viewBox="0 0 16 15"><rect x="0.5" y="0.5" width="15" height="14" fill="url(#gb)" stroke="#6e6e6e"/><rect x="0" y="13.6" width="16" height="1.4" fill="#111"/><rect x="11" y="1" width="4" height="13" fill="#dcdcdc"/><rect x="1" y="10" width="14" height="3.6" fill="#dcdcdc"/><rect x="12" y="2" width="2" height="2" fill="#333"/><rect x="2" y="11" width="2" height="2" fill="#333"/></svg><span class="t" style="left:51.1px;top:438px;color:#1e1e1e;transform:scaleX(0.9586);transform-origin:0 0;">ScrollView</span><svg style="position:absolute;left:19px;top:459px;" width="15" height="15" viewBox="0 0 15 15"><rect x="0.5" y="0.5" width="14" height="14" fill="#fff" stroke="#6e6e6e"/><rect x="0" y="13.6" width="15" height="1.4" fill="#111"/><rect x="2.5" y="2.2" width="10" height="3.2" rx="1" fill="#fff" stroke="#b4b4b4" stroke-width="0.9"/><path d="M1 7 H14" stroke="#b8b8b8" stroke-width="0.8" stroke-dasharray="1 1"/><path d="M7.5 7.5 V13" stroke="#b8b8b8" stroke-width="0.8" stroke-dasharray="1 1"/><rect x="2.2" y="8.7" width="3.8" height="3.6" rx="1" fill="#cfe8fb" stroke="#2f8fdc" stroke-width="1.1"/><rect x="9.2" y="8.7" width="3.8" height="3.6" rx="1" fill="#fff" stroke="#9a9a9a" stroke-width="1"/></svg><span class="t" style="left:51.1px;top:459px;color:#1e1e1e;transform:scaleX(0.9730);transform-origin:0 0;">SlidingDrawer</span><svg style="position:absolute;left:19px;top:480px;" width="16" height="15" viewBox="0 0 16 15"><rect x="0.5" y="0.5" width="15" height="14" fill="url(#gb)" stroke="#6e6e6e"/><rect x="0" y="13.6" width="16" height="1.4" fill="#111"/><path d="M5.5 0.5 V3 M10.5 0.5 V3" stroke="#6e6e6e"/></svg><span class="t" style="left:51.1px;top:480px;color:#1e1e1e;transform:scaleX(1.0110);transform-origin:0 0;">TabHost</span><svg style="position:absolute;left:19px;top:501px;" width="16" height="15" viewBox="0 0 16 15"><rect x="0" y="3" width="16" height="7" fill="#3a3a3a"/><rect x="2" y="4" width="12" height="4.5" fill="#f2f2f2"/></svg><span class="t" style="left:51.1px;top:501px;color:#1e1e1e;transform:scaleX(1.0179);transform-origin:0 0;">TabWidget</span><svg style="position:absolute;left:19px;top:522px;" width="15" height="15" viewBox="0 0 15 15"><rect x="0.5" y="0.5" width="14" height="14" fill="url(#gb)" stroke="#6e6e6e"/><rect x="0" y="13.6" width="15" height="1.4" fill="#111"/></svg><span class="t" style="left:51.1px;top:522px;color:#1e1e1e;transform:scaleX(0.9731);transform-origin:0 0;">WebView</span><div style="left:2px;top:541px;width:170px;height:18px;background:#f5f5f5"></div><svg style="position:absolute;left:8px;top:547px" width="6" height="6"><path d="M6 0 V6 H0 Z" fill="#1e1e1e"/></svg><span class="t" style="left:18.8px;top:542px;color:#1e1e1e;transform:scaleX(0.9876);transform-origin:0 0;">Advanced</span><svg style="position:absolute;left:23px;top:565px;" width="9" height="12" viewBox="0 0 9 12"><path d="M0.5 0.3 V9.5 L2.6 7.6 L4.3 11.3 L5.9 10.6 L4.3 7 L7.2 7 Z" fill="#3c3c3c"/></svg><span class="t" style="left:51.1px;top:562px;color:#1e1e1e;transform:scaleX(1.0022);transform-origin:0 0;">Pointer</span><svg style="position:absolute;left:19px;top:583px;" width="15" height="15" viewBox="0 0 15 15"><rect x="0.5" y="0.5" width="14" height="14" fill="#fff" stroke="#6e6e6e"/><rect x="0" y="13.6" width="15" height="1.4" fill="#111"/><rect x="2.5" y="2.2" width="10" height="3.2" rx="1" fill="#fff" stroke="#b4b4b4" stroke-width="0.9"/><path d="M1 7 H14" stroke="#b8b8b8" stroke-width="0.8" stroke-dasharray="1 1"/><path d="M7.5 7.5 V13" stroke="#b8b8b8" stroke-width="0.8" stroke-dasharray="1 1"/><rect x="2.2" y="8.7" width="3.8" height="3.6" rx="1" fill="#cfe8fb" stroke="#2f8fdc" stroke-width="1.1"/><rect x="9.2" y="8.7" width="3.8" height="3.6" rx="1" fill="#fff" stroke="#9a9a9a" stroke-width="1"/></svg><span class="t" style="left:51.1px;top:583px;color:#1e1e1e;transform:scaleX(0.9650);transform-origin:0 0;">DialerFilter</span><svg style="position:absolute;left:19px;top:604px;" width="15" height="15" viewBox="0 0 15 15"><rect x="0.5" y="0.5" width="14" height="14" fill="url(#gb)" stroke="#6e6e6e"/><rect x="0" y="13.6" width="15" height="1.4" fill="#111"/></svg><span class="t" style="left:51.1px;top:604px;color:#1e1e1e;transform:scaleX(0.9525);transform-origin:0 0;">GestureOverlayView</span><svg style="position:absolute;left:19px;top:625px;" width="15" height="15" viewBox="0 0 15 15"><rect x="0.5" y="0.5" width="14" height="14" fill="url(#gb)" stroke="#6e6e6e"/><rect x="0" y="13.6" width="15" height="1.4" fill="#111"/></svg><span class="t" style="left:51.1px;top:625px;color:#1e1e1e;transform:scaleX(0.9502);transform-origin:0 0;">SurfaceView</span><svg style="position:absolute;left:19px;top:646px;" width="15" height="15" viewBox="0 0 15 15"><rect x="0.5" y="0.5" width="14" height="14" fill="url(#gb)" stroke="#6e6e6e"/><rect x="0" y="13.6" width="15" height="1.4" fill="#111"/></svg><span class="t" style="left:51.1px;top:646px;color:#1e1e1e;transform:scaleX(1.0011);transform-origin:0 0;">TwoLineListItem</span><svg style="position:absolute;left:19px;top:667px;" width="15" height="15" viewBox="0 0 15 15"><rect x="0.5" y="0.5" width="14" height="14" fill="url(#gb)" stroke="#6e6e6e"/><rect x="0" y="13.6" width="15" height="1.4" fill="#111"/></svg><span class="t" style="left:51.1px;top:667px;color:#1e1e1e;transform:scaleX(0.9730);transform-origin:0 0;">View</span><svg style="position:absolute;left:19px;top:688px;" width="15" height="15" viewBox="0 0 15 15"><rect x="0.5" y="0.5" width="14" height="14" fill="url(#gb)" stroke="#6e6e6e"/><rect x="0" y="13.6" width="15" height="1.4" fill="#111"/></svg><span class="t" style="left:51.1px;top:688px;color:#1e1e1e;transform:scaleX(0.9610);transform-origin:0 0;">ViewStub</span><svg style="position:absolute;left:19px;top:709px;" width="15" height="15" viewBox="0 0 15 15"><rect x="0.5" y="0.5" width="14" height="14" fill="url(#gb)" stroke="#6e6e6e"/><rect x="0" y="13.6" width="15" height="1.4" fill="#111"/></svg><span class="t" style="left:51.1px;top:709px;color:#1e1e1e;transform:scaleX(1.0345);transform-origin:0 0;">ZoomButton</span><div style="left:2px;top:728px;width:170px;height:20px;background:#c9ccda"></div><svg style="position:absolute;left:19px;top:730px;" width="15" height="15" viewBox="0 0 15 15"><rect x="0.5" y="0.5" width="14" height="14" fill="url(#gb)" stroke="#6e6e6e"/><rect x="0" y="13.6" width="15" height="1.4" fill="#111"/></svg><span class="t" style="left:51.1px;top:730px;color:#1e1e1e;transform:scaleX(1.0191);transform-origin:0 0;">ZoomControls</span><div style="left:2px;top:749px;width:170px;height:18px;background:#f5f5f5"></div><svg style="position:absolute;left:8px;top:755px" width="6" height="6"><path d="M6 0 V6 H0 Z" fill="#1e1e1e"/></svg><span class="t" style="left:18.8px;top:750px;color:#1e1e1e;transform:scaleX(0.9883);transform-origin:0 0;">Form Widgets</span><svg style="position:absolute;left:23px;top:773px;" width="9" height="12" viewBox="0 0 9 12"><path d="M0.5 0.3 V9.5 L2.6 7.6 L4.3 11.3 L5.9 10.6 L4.3 7 L7.2 7 Z" fill="#3c3c3c"/></svg><span class="t" style="left:51.1px;top:770px;color:#1e1e1e;transform:scaleX(1.0022);transform-origin:0 0;">Pointer</span><svg style="position:absolute;left:19px;top:791px;" width="17" height="15" viewBox="0 0 17 15"><rect x="0.5" y="3.5" width="16" height="10" fill="url(#gb)" stroke="#6e6e6e"/><rect x="0" y="12.6" width="17" height="1.4" fill="#111"/></svg><span class="t" style="left:51.1px;top:791px;color:#1e1e1e;transform:scaleX(1.0297);transform-origin:0 0;">Button</span><svg style="position:absolute;left:19px;top:812px;" width="15" height="15" viewBox="0 0 15 15"><rect x="0.5" y="0.5" width="14" height="14" fill="url(#gb)" stroke="#6e6e6e"/><rect x="0" y="13.6" width="15" height="1.4" fill="#111"/></svg><span class="t" style="left:51.1px;top:812px;color:#1e1e1e;transform:scaleX(1.0000);transform-origin:0 0;">CheckBox</span></div><div style="left:205px;top:85px;width:102px;height:19px;background:#fff29d;"></div><span class="t" style="left:209.6px;top:88px;color:#1e1e1e;transform:scaleX(0.9893);transform-origin:0 0;">Main.axml</span><svg style="position:absolute;left:274px;top:92px;" width="9" height="8" viewBox="0 0 9 8"><path d="M0 3.5 H3 M3.5 0 V7 M3.5 1.5 H7.5 V5.5 H3.5" stroke="#5a5033" stroke-width="1" fill="none"/></svg><svg style="position:absolute;left:292px;top:91px;" width="10" height="9" viewBox="0 0 10 9"><path d="M0.8 0.5 L9.2 8.5 M9.2 0.5 L0.8 8.5" stroke="#5a5033" stroke-width="1.2"/></svg><div style="left:307px;top:85px;width:128px;height:19px;background:#364e6f;"></div><span class="t" style="left:311px;top:88px;color:#ffffff;transform:scaleX(1.0325);transform-origin:0 0;">MainActivity.cs</span><svg style="position:absolute;left:1106px;top:94px;" width="8" height="5" viewBox="0 0 8 5"><path d="M0 0 H8 L4 4.5 Z" fill="#e6e9f0"/></svg><div style="left:205px;top:104px;width:912px;height:845px;background:#8e9bbc;"></div><div style="left:205px;top:104px;width:912px;height:2px;background:#fff29d;"></div><div style="left:206px;top:106px;width:910px;height:842px;background:#ffffff;"></div><div style="left:206px;top:106px;width:910px;height:821px;background:#f9f9f9;border:1px solid #9a9a9a;border-bottom:none;"></div><div style="left:206px;top:927px;width:54px;height:21px;background:#f9f9f9;border:1px solid #9a9a9a;border-top:none;"></div><div style="left:207px;top:107px;width:908px;height:34px;background:#f9f9f9;"></div><div style="left:216px;top:116px;width:104px;height:20px;background:#fcfcfc;border:1px solid #efefef;"></div><span class="t" style="left:218.3px;top:119px;color:#1e1e1e;transform:scaleX(0.9860);transform-origin:0 0;">Alternative Layouts</span><div style="left:326px;top:116px;width:1px;height:20px;background:#a0a0a0;"></div><div style="left:329px;top:116px;width:131px;height:20px;background:#fcfcfc;border:1px solid #efefef;"></div><span class="t" style="left:331.3px;top:119px;color:#1e1e1e;transform:scaleX(0.9521);transform-origin:0 0;">3.7&quot; WVGA (Nexus One)</span><div style="left:462px;top:116px;width:1px;height:20px;background:#a0a0a0;"></div><div style="left:465px;top:115px;width:22px;height:22px;background:linear-gradient(#cfe9fa 0%,#c0e2f7 48%,#a6d9f4 52%,#9fd6f3 100%);border:1px solid #2f6a9b;border-radius:3px;"></div><svg style="position:absolute;left:471px;top:119px;" width="11" height="15" viewBox="0 0 11 15"><rect x="0.5" y="0.5" width="10" height="14" rx="1.5" fill="#ffffff" stroke="#9a9a9a"/><defs><linearGradient id="scr" x1="0" y1="0" x2="1" y2="1"><stop offset="0" stop-color="#6a6a6a"/><stop offset="0.5" stop-color="#3a3a3a"/><stop offset="1" stop-color="#4a4a4a"/></linearGradient></defs><rect x="2" y="2" width="7" height="9.5" fill="url(#scr)"/><rect x="3" y="12.5" width="1" height="1" fill="#888"/><rect x="5" y="12.5" width="1" height="1" fill="#888"/><rect x="7" y="12.5" width="1" height="1" fill="#888"/></svg><svg style="position:absolute;left:497px;top:121px;" width="15" height="11" viewBox="0 0 15 11"><rect x="0.5" y="0.5" width="14" height="10" rx="1.5" fill="#ffffff" stroke="#9a9a9a"/><rect x="3" y="2" width="10" height="7" fill="url(#scr)"/><rect x="1.5" y="3" width="1" height="1" fill="#888"/><rect x="1.5" y="5" width="1" height="1" fill="#888"/><rect x="1.5" y="7" width="1" height="1" fill="#888"/></svg><div style="left:517px;top:116px;width:1px;height:20px;background:#a0a0a0;"></div><div style="left:521px;top:116px;width:103px;height:20px;background:#fcfcfc;border:1px solid #efefef;"></div><span class="t" style="left:523.4px;top:119px;color:#1e1e1e;transform:scaleX(0.9595);transform-origin:0 0;">Android 4.4.2 (v19)</span><div style="left:627px;top:116px;width:1px;height:20px;background:#a0a0a0;"></div><div style="left:630px;top:116px;width:84px;height:20px;background:#fcfcfc;border:1px solid #efefef;"></div><span class="t" style="left:633.2px;top:119px;color:#1e1e1e;transform:scaleX(0.9757);transform-origin:0 0;">(All languages)</span><div style="left:717px;top:116px;width:1px;height:20px;background:#a0a0a0;"></div><div style="left:720px;top:116px;width:35px;height:20px;background:#fcfcfc;border:1px solid #efefef;"></div><span class="t" style="left:723.4px;top:119px;color:#1e1e1e;transform:scaleX(1.0128);transform-origin:0 0;">Mode</span><div style="left:1023px;top:116px;width:84px;height:20px;background:#fcfcfc;border:1px solid #efefef;"></div><span class="t" style="left:1026px;top:119px;color:#1e1e1e;transform:scaleX(0.9966);transform-origin:0 0;">Default Theme</span><div style="left:211px;top:141px;width:900px;height:1px;background:#cdcdcd;"></div><svg style="position:absolute;left:211px;top:142px;shape-rendering:crispEdges;" width="885" height="763" viewBox="0 0 885 763"><defs><pattern id="pd" width="2" height="2" patternUnits="userSpaceOnUse"><rect x="0" y="0" width="1" height="1" fill="#e6e6e6"/></pattern><pattern id="pv" width="26" height="26" patternUnits="userSpaceOnUse"><rect x="15" y="0" width="3" height="26" fill="#fafafa"/><rect x="0" y="17" width="26" height="3" fill="#fafafa"/><rect x="16" y="0" width="1" height="26" fill="#ebebeb"/><rect x="0" y="18" width="26" height="1" fill="#ebebeb"/></pattern></defs><rect width="885" height="763" fill="#fafafa"/><rect width="885" height="763" fill="url(#pd)"/><rect width="885" height="763" fill="url(#pv)"/></svg><div style="left:1094px;top:142px;width:17px;height:763px;background:#e8e8ec;"></div><svg style="position:absolute;left:1098px;top:148px;" width="9" height="5" viewBox="0 0 9 5"><path d="M0 5 L4.5 0 L9 5 Z" fill="#868999"/></svg><div style="left:1098px;top:159px;width:9px;height:729px;background:#d0d1d7;"></div><svg style="position:absolute;left:1098px;top:894px;" width="9" height="5" viewBox="0 0 9 5"><path d="M0 0 L4.5 5 L9 0 Z" fill="#868999"/></svg><div style="left:211px;top:905px;width:883px;height:17px;background:#e8e8ec;"></div><svg style="position:absolute;left:217px;top:909px;" width="5" height="9" viewBox="0 0 5 9"><path d="M5 0 L0 4.5 L5 9 Z" fill="#c2c3c9"/></svg><svg style="position:absolute;left:1083px;top:909px;" width="5" height="9" viewBox="0 0 5 9"><path d="M0 0 L5 4.5 L0 9 Z" fill="#c2c3cb"/></svg><div style="left:1094px;top:905px;width:17px;height:17px;background:#eeeeee;"></div><div style="left:259px;top:926px;width:856px;height:1px;background:#9a9a9a;"></div><div style="left:260px;top:927px;width:855px;height:20px;background:#ffffff;"></div><div style="left:259px;top:926px;width:1px;height:21px;background:#9a9a9a;"></div><span class="t" style="left:215px;top:930px;color:#1e1e1e;transform:scaleX(0.9502);transform-origin:0 0;">Design</span><div style="left:259px;top:926px;width:49px;height:20px;background:linear-gradient(#f4f4f4 0%,#ececec 45%,#dddddd 55%,#d4d4d4 100%);border:1px solid #8a8a8a;"></div><span class="t" style="left:264.8px;top:929px;color:#1e1e1e;transform:scaleX(0.9443);transform-origin:0 0;">Source</span><div style="left:426px;top:151px;width:454px;height:744px;background:#d9d9d9;border:1px solid #d0d0d0;box-shadow:1px 1px 3px rgba(0,0,0,0.14);"></div><div style="left:434px;top:159px;width:437px;height:1px;background:#e8e8e8;"></div><div style="left:434px;top:159px;width:1px;height:727px;background:#e8e8e8;"></div><div style="left:435px;top:160px;width:436px;height:726px;background:#000000;"></div><div style="left:435px;top:193px;width:436px;height:1px;background:#111111;"></div><div style="left:435px;top:256px;width:436px;height:3px;background:#33b5e5;"></div><div style="left:440px;top:264px;width:426px;height:56px;background:#202326;border-radius:2px;box-shadow:0 1px 0 #3a3d40 inset;"></div><span class="t" style="left:534px;top:277.3px;color:#e2e2e2;font-size:25px;line-height:28px;transform:scaleX(0.9677);transform-origin:0 0">Hello World, Click Me!</span><svg style="position:absolute;left:816px;top:163px;" width="28" height="22" viewBox="0 0 28 22"><path d="M14 21.3 L0.63 5.37 A20.8 20.8 0 0 1 27.37 5.37 Z" fill="#2e92bc"/><path d="M2.39 9.27 A15.7 15.7 0 0 1 25.61 9.27" stroke="#000" stroke-width="1.1" fill="none"/><path d="M6.24 13.26 A10.5 10.5 0 0 1 21.76 13.26" stroke="#000" stroke-width="1.1" fill="none"/><path d="M9.79 16.93 A5.7 5.7 0 0 1 18.21 16.93" stroke="#000" stroke-width="1.1" fill="none"/></svg><svg style="position:absolute;left:848px;top:162px;" width="15" height="23" viewBox="0 0 15 23"><rect x="4.3" y="1" width="6.4" height="2.5" fill="#2e92bc"/><rect x="0.5" y="3" width="13.8" height="19" fill="#2e92bc"/><path d="M7.8 7 L10.6 7 L9 10.8 L11.2 10.8 L6.2 18 L7.6 13.2 L5.2 13.2 Z" fill="#e4f3f9"/></svg><div style="left:927px;top:157px;width:152px;height:36px;background:#ffffff;border:1px solid #d4d4d4;border-radius:5px;"></div><svg style="position:absolute;left:938px;top:168px;" width="14" height="14" viewBox="0 0 14 14"><rect x="0.75" y="0.75" width="12.5" height="12.5" fill="none" stroke="#6d6d6d" stroke-width="1.5"/><path d="M0.75 6.25 H13.25 M7 6.25 V13.25" stroke="#6d6d6d" stroke-width="1.5"/></svg><svg style="position:absolute;left:967px;top:168px;" width="14" height="14" viewBox="0 0 14 14"><rect x="0.75" y="0.75" width="12.5" height="12.5" fill="none" stroke="#6d6d6d" stroke-width="1.5"/><path d="M4 4 V10 M7 5 V6 M7 8 V9 M10 4 V10" stroke="#6d6d6d" stroke-width="1.4"/></svg><svg style="position:absolute;left:996px;top:168px;" width="14" height="14" viewBox="0 0 14 14"><path d="M0.75 4 V0.75 H4 M10 0.75 H13.25 V4 M13.25 10 V13.25 H10 M4 13.25 H0.75 V10" stroke="#6d6d6d" stroke-width="1.5" fill="none"/></svg><svg style="position:absolute;left:1025px;top:168px;" width="14" height="14" viewBox="0 0 14 14"><rect x="0.75" y="0.75" width="12.5" height="12.5" fill="none" stroke="#6d6d6d" stroke-width="1.5"/><path d="M3.5 7 H10.5 M7 3.5 V10.5" stroke="#6d6d6d" stroke-width="1.6"/></svg><svg style="position:absolute;left:1054px;top:168px;" width="14" height="14" viewBox="0 0 14 14"><rect x="0.75" y="0.75" width="12.5" height="12.5" fill="none" stroke="#6d6d6d" stroke-width="1.5"/><path d="M3.5 7 H10.5" stroke="#6d6d6d" stroke-width="1.6"/></svg><div style="left:1123px;top:85px;width:375px;height:406px;background:#8e9bbc;"></div><div style="left:1123px;top:85px;width:375px;height:1px;background:#8e9bbc;"></div><div style="left:1124px;top:86px;width:373px;height:21px;background:#4d6082;"></div><span class="t" style="left:1128.2px;top:89px;color:#ffffff;transform:scaleX(0.9718);transform-origin:0 0;">Solution Explorer</span><svg style="position:absolute;left:1449px;top:94px;" width="8" height="5" viewBox="0 0 8 5"><path d="M0 0 H8 L4 4.5 Z" fill="#e6e9f0"/></svg><svg style="position:absolute;left:1466px;top:90px;" width="8" height="12" viewBox="0 0 8 12"><path d="M2 0.5 V6.5 M1.5 0.5 H6 M5.5 0.5 V6.5 M0 6.5 H8 M4 6.5 V12" stroke="#e6e9f0" stroke-width="1.1" fill="none"/><rect x="2" y="1" width="1.6" height="5.5" fill="#e6e9f0"/></svg><svg style="position:absolute;left:1481px;top:92px;" width="10" height="9" viewBox="0 0 10 9"><path d="M0.6 0.6 L9.4 8.4 M9.4 0.6 L0.6 8.4" stroke="#e6e9f0" stroke-width="1.3"/></svg><div style="left:1124px;top:107px;width:373px;height:28px;background:#cfd6e5;"></div><svg style="position:absolute;left:1133px;top:114px;" width="13" height="13" viewBox="0 0 13 13"><circle cx="6.5" cy="6.5" r="6.3" fill="#b7bcc9"/><path d="M3 6.5 H10 M3 6.5 L6 3.6 M3 6.5 L6 9.4" stroke="#dfe3ec" stroke-width="1.6" fill="none"/></svg><svg style="position:absolute;left:1155px;top:114px;" width="13" height="13" viewBox="0 0 13 13"><circle cx="6.5" cy="6.5" r="6.3" fill="#b7bcc9"/><path d="M10 6.5 H3 M10 6.5 L7 3.6 M10 6.5 L7 9.4" stroke="#dfe3ec" stroke-width="1.6" fill="none"/></svg><svg style="position:absolute;left:1175px;top:113px;" width="15" height="15" viewBox="0 0 15 15"><path d="M1 7.5 L7.5 1 L14 7.5 M3 6 V14 H12 V6" stroke="#1e1e1e" stroke-width="1.5" fill="none"/><rect x="6" y="9" width="3" height="5" fill="#1e1e1e"/></svg><div style="left:1198px;top:111px;width:1px;height:20px;background:#a6aec1;"></div><svg style="position:absolute;left:1207px;top:112px;" width="16" height="16" viewBox="0 0 16 16"><path d="M0 0 L4 0 L4 1.5 L2.5 1.5 L2.5 4" stroke="#1e1e1e" stroke-width="1.2" fill="none"/><circle cx="9" cy="9" r="5" fill="none" stroke="#1e1e1e" stroke-width="1.6"/><path d="M9 6 V9 H11.5" stroke="#1e1e1e" stroke-width="1.3" fill="none"/></svg><svg style="position:absolute;left:1229px;top:119px;" width="6" height="4" viewBox="0 0 6 4"><path d="M0 0 H6 L3 3.5 Z" fill="#1e1e1e"/></svg><svg style="position:absolute;left:1242px;top:114px;" width="13" height="13" viewBox="0 0 13 13"><path d="M1 4 H11 M8 1 L11.5 4 L8 7 M12 9 H2 M5 6 L1.5 9 L5 12" stroke="#1e1e1e" stroke-width="1.6" fill="none"/></svg><svg style="position:absolute;left:1263px;top:113px;" width="13" height="15" viewBox="0 0 13 15"><path d="M2.5 9.5 A5 5 0 0 1 6.5 2.5 L9 2.5 M10.5 5.5 A5 5 0 0 1 6.5 12.5 L4 12.5" stroke="#1e1e1e" stroke-width="2" fill="none"/><path d="M8 0 L11 2.5 L8 5 Z M5 10 L2 12.5 L5 15 Z" fill="#1e1e1e"/></svg><svg style="position:absolute;left:1285px;top:113px;" width="15" height="15" viewBox="0 0 15 15"><rect x="4.5" y="0.5" width="10" height="9" fill="none" stroke="#1e1e1e"/><rect x="2.5" y="2.5" width="10" height="9" fill="#cfd6e5" stroke="#1e1e1e"/><rect x="0.5" y="4.5" width="10" height="10" fill="#cfd6e5" stroke="#1e1e1e" stroke-width="1.4"/><rect x="3" y="8" width="5" height="2" fill="#00539c"/></svg><svg style="position:absolute;left:1307px;top:112px;" width="15" height="16" viewBox="0 0 15 16"><path d="M0.5 0.5 H7 M0.5 0.5 V10" stroke="#1e1e1e" stroke-dasharray="1 1" fill="none"/><path d="M4.5 4.5 H11 L14.5 8 V15.5 H4.5 Z" fill="#f6f6f6" stroke="#1e1e1e"/><path d="M6.5 8.5 H11 M6.5 10.5 H12 M6.5 12.5 H12" stroke="#1e1e1e"/></svg><div style="left:1329px;top:111px;width:1px;height:20px;background:#a6aec1;"></div><svg style="position:absolute;left:1338px;top:113px;" width="14" height="14" viewBox="0 0 14 14"><path d="M1.5 12.5 L7 7" stroke="#1e1e1e" stroke-width="2.8"/><circle cx="9.5" cy="4.5" r="3.8" fill="#1e1e1e"/><path d="M9 0 L13.5 4.5 L11 7" fill="#cfd6e5"/><rect x="9" y="1" width="3" height="2.6" transform="rotate(45 10.5 2.3)" fill="#cfd6e5"/></svg><svg style="position:absolute;left:1358px;top:118px;" width="15" height="5" viewBox="0 0 15 5"><rect x="0" y="2" width="15" height="1.2" fill="#1e1e1e"/><rect x="6" y="0" width="9" height="5" fill="#1e1e1e"/></svg><div style="left:1124px;top:135px;width:373px;height:20px;background:#fcfcfc;"></div><div style="left:1124px;top:155px;width:373px;height:1px;background:#bcc6d9;"></div><div style="left:1124px;top:156px;width:373px;height:2px;background:#d6dbe9;"></div><span class="t" style="left:1129px;top:138px;color:#6d6d6d;transform:scaleX(0.9661);transform-origin:0 0;">Search Solution Explorer (Ctrl+;)</span><svg style="position:absolute;left:1469px;top:139px;" width="14" height="14" viewBox="0 0 14 14"><circle cx="8.8" cy="5.2" r="3.6" fill="none" stroke="#595959" stroke-width="1.7"/><path d="M6.2 7.8 L1.5 12.5" stroke="#595959" stroke-width="2.4"/></svg><svg style="position:absolute;left:1487px;top:144px;" width="6" height="4" viewBox="0 0 6 4"><path d="M0 0 H6 L3 3.5 Z" fill="#595959"/></svg><div style="left:1124px;top:158px;width:373px;height:333px;background:#ffffff;"></div><div style="left:1124px;top:322px;width:373px;height:19px;background:#c9ccda;"></div><svg style="position:absolute;left:1137px;top:163px;" width="15" height="14" viewBox="0 0 15 14"><path d="M0.5 5 V1 H13.5 V11.5 H8" fill="none" stroke="#424242" stroke-width="1.2"/><rect x="0" y="0" width="14" height="2.2" fill="#424242"/><path d="M0.8 8.5 L3.2 10.8 L6.8 7 V13.5 L3.2 10.8 L0.8 13" fill="none" stroke="#424242" stroke-width="1.4"/></svg><span class="t" style="left:1157px;top:162px;color:#1e1e1e;transform:scaleX(1.0057);transform-origin:0 0;">Solution 'Phoneword' (1 project)</span><svg style="position:absolute;left:1135px;top:186px;" width="6" height="6" viewBox="0 0 6 6"><path d="M6 0 V6 H0 Z" fill="#1e1e1e"/></svg><svg style="position:absolute;left:1156px;top:181px;" width="10" height="15" viewBox="0 0 10 15"><rect x="0.6" y="0.6" width="8.8" height="13.8" rx="1" fill="#f6f6f6" stroke="#424242" stroke-width="1.2"/><rect x="2" y="2" width="6" height="8" fill="#ffffff"/><path d="M3.2 4.5 H6.8 V8 H3.2 Z M3.6 3.2 L3 2.3 M6.4 3.2 L7 2.3" stroke="#3c9a3c" stroke-width="1" fill="#3c9a3c"/><rect x="3.3" y="3.6" width="3.4" height="1.2" fill="#3c9a3c"/><rect x="2" y="11.5" width="1.2" height="1.2" fill="#424242"/><rect x="4.4" y="11.5" width="1.2" height="1.2" fill="#424242"/><rect x="6.8" y="11.5" width="1.2" height="1.2" fill="#424242"/></svg><span class="t" style="left:1175.6px;top:180px;color:#1e1e1e;font-weight:bold;transform:scaleX(0.9573);transform-origin:0 0;">Phoneword_Droid</span><svg style="position:absolute;left:1153px;top:201px;" width="6" height="10" viewBox="0 0 6 10"><path d="M0.7 0.8 L5.3 5 L0.7 9.2 Z" fill="none" stroke="#1e1e1e" stroke-width="1.1"/></svg><svg style="position:absolute;left:1174px;top:200px;" width="12" height="12" viewBox="0 0 12 12"><path d="M1 11 L6 6" stroke="#1e1e1e" stroke-width="2.6"/><circle cx="8" cy="4" r="3.6" fill="#1e1e1e"/><path d="M7.5 0 L12 4.5 V0 Z" fill="#ffffff"/><rect x="8" y="0.5" width="2.5" height="3" transform="rotate(45 9.25 2)" fill="#ffffff"/></svg><span class="t" style="left:1193.5px;top:198px;color:#1e1e1e;transform:scaleX(0.9582);transform-origin:0 0;">Properties</span><svg style="position:absolute;left:1153px;top:219px;" width="6" height="10" viewBox="0 0 6 10"><path d="M0.7 0.8 L5.3 5 L0.7 9.2 Z" fill="none" stroke="#1e1e1e" stroke-width="1.1"/></svg><svg style="position:absolute;left:1173px;top:221px;" width="14" height="6" viewBox="0 0 14 6"><rect x="0" y="1" width="4" height="4" fill="#1e1e1e"/><rect x="4" y="2.5" width="3" height="1" fill="#1e1e1e"/><rect x="7" y="0" width="6" height="6" fill="#1e1e1e"/></svg><span class="t" style="left:1193.5px;top:216px;color:#1e1e1e;transform:scaleX(0.9159);transform-origin:0 0;">References</span><svg style="position:absolute;left:1172px;top:235px;" width="15" height="15" viewBox="0 0 15 15"><path d="M0.5 0.5 H10 L12 2 V13.5 H0.5 Z" fill="#f3e5a1" stroke="#e8d68a"/><path d="M11 10 L14 13 M11 13 L14 10" stroke="#b0b0b0" stroke-width="1"/></svg><span class="t" style="left:1193.5px;top:234px;color:#1e1e1e;transform:scaleX(1.0025);transform-origin:0 0;">Components</span><svg style="position:absolute;left:1153px;top:255px;" width="6" height="10" viewBox="0 0 6 10"><path d="M0.7 0.8 L5.3 5 L0.7 9.2 Z" fill="none" stroke="#1e1e1e" stroke-width="1.1"/></svg><svg style="position:absolute;left:1174px;top:254px;" width="13" height="12" viewBox="0 0 13 12"><path d="M0 2 H5.5 L6 0 H13 V11 H0 Z" fill="#dcb67a"/><rect x="6.5" y="1" width="6" height="1" fill="#f3e3c4"/></svg><span class="t" style="left:1193.5px;top:252px;color:#1e1e1e;transform:scaleX(0.9028);transform-origin:0 0;">Assets</span><svg style="position:absolute;left:1153px;top:276px;" width="6" height="6" viewBox="0 0 6 6"><path d="M6 0 V6 H0 Z" fill="#1e1e1e"/></svg><svg style="position:absolute;left:1173px;top:272px;" width="15" height="12" viewBox="0 0 15 12"><path d="M1.5 10.5 V2.5 H6.5 L7 0.5 H13.5 V10.5" fill="#f3f3f3" stroke="#dcb67a" stroke-width="1"/><path d="M0 6 H10.8 L14 11.5 H1.2 Z" fill="#dcb67a"/></svg><span class="t" style="left:1193.5px;top:270px;color:#1e1e1e;transform:scaleX(0.9135);transform-origin:0 0;">Resources</span><svg style="position:absolute;left:1171px;top:291px;" width="6" height="10" viewBox="0 0 6 10"><path d="M0.7 0.8 L5.3 5 L0.7 9.2 Z" fill="none" stroke="#1e1e1e" stroke-width="1.1"/></svg><svg style="position:absolute;left:1192px;top:290px;" width="13" height="12" viewBox="0 0 13 12"><path d="M0 2 H5.5 L6 0 H13 V11 H0 Z" fill="#dcb67a"/><rect x="6.5" y="1" width="6" height="1" fill="#f3e3c4"/></svg><span class="t" style="left:1211.4px;top:288px;color:#1e1e1e;transform:scaleX(0.9794);transform-origin:0 0;">drawable</span><svg style="position:absolute;left:1171px;top:312px;" width="6" height="6" viewBox="0 0 6 6"><path d="M6 0 V6 H0 Z" fill="#1e1e1e"/></svg><svg style="position:absolute;left:1191px;top:308px;" width="15" height="12" viewBox="0 0 15 12"><path d="M1.5 10.5 V2.5 H6.5 L7 0.5 H13.5 V10.5" fill="#f3f3f3" stroke="#dcb67a" stroke-width="1"/><path d="M0 6 H10.8 L14 11.5 H1.2 Z" fill="#dcb67a"/></svg><span class="t" style="left:1211.4px;top:306px;color:#1e1e1e;transform:scaleX(1.0120);transform-origin:0 0;">layout</span><svg style="position:absolute;left:1210px;top:325px;" width="13" height="16" viewBox="0 0 13 16"><path d="M0.5 0.5 H9.5 L12.5 3.5 V15.5 H0.5 Z" fill="url(#gb)" stroke="#6e6e6e"/><path d="M9.5 0.5 V3.5 H12.5" fill="none" stroke="#9a9a9a"/></svg><span class="t" style="left:1229.3px;top:324px;color:#1e1e1e;transform:scaleX(0.9893);transform-origin:0 0;">Main.axml</span><svg style="position:absolute;left:1171px;top:345px;" width="6" height="10" viewBox="0 0 6 10"><path d="M0.7 0.8 L5.3 5 L0.7 9.2 Z" fill="none" stroke="#1e1e1e" stroke-width="1.1"/></svg><svg style="position:absolute;left:1192px;top:344px;" width="13" height="12" viewBox="0 0 13 12"><path d="M0 2 H5.5 L6 0 H13 V11 H0 Z" fill="#dcb67a"/><rect x="6.5" y="1" width="6" height="1" fill="#f3e3c4"/></svg><span class="t" style="left:1211.2px;top:342px;color:#1e1e1e;transform:scaleX(0.9456);transform-origin:0 0;">values</span><svg style="position:absolute;left:1193px;top:362px;" width="11" height="12" viewBox="0 0 11 12"><path d="M0.6 0.6 H7 L10.4 4 V11.4 H0.6 Z" fill="#f6f6f6" stroke="#424242" stroke-width="1.2"/><path d="M7 0.6 L10.4 4 H7 Z" fill="#424242"/></svg><span class="t" style="left:1211.2px;top:360px;color:#1e1e1e;transform:scaleX(0.9715);transform-origin:0 0;">AboutResources.txt</span><svg style="position:absolute;left:1171px;top:381px;" width="6" height="10" viewBox="0 0 6 10"><path d="M0.7 0.8 L5.3 5 L0.7 9.2 Z" fill="none" stroke="#1e1e1e" stroke-width="1.1"/></svg><svg style="position:absolute;left:1193px;top:382px;" width="12" height="8" viewBox="0 0 12 8"><path d="M5.2 1.6 Q4.4 0.9 3.3 0.9 Q0.9 0.9 0.9 3.8 Q0.9 6.7 3.3 6.7 Q4.4 6.7 5.2 6" stroke="#2e8b2e" stroke-width="1.8" fill="none"/><path d="M7.8 0 V5.5 M10.2 0 V5.5 M6.6 1.7 H11.4 M6.6 3.9 H11.4" stroke="#2e8b2e" stroke-width="1.1"/></svg><span class="t" style="left:1211.2px;top:378px;color:#1e1e1e;transform:scaleX(0.9430);transform-origin:0 0;">Resource.Designer.cs</span><svg style="position:absolute;left:1153px;top:399px;" width="6" height="10" viewBox="0 0 6 10"><path d="M0.7 0.8 L5.3 5 L0.7 9.2 Z" fill="none" stroke="#1e1e1e" stroke-width="1.1"/></svg><svg style="position:absolute;left:1175px;top:400px;" width="12" height="8" viewBox="0 0 12 8"><path d="M5.2 1.6 Q4.4 0.9 3.3 0.9 Q0.9 0.9 0.9 3.8 Q0.9 6.7 3.3 6.7 Q4.4 6.7 5.2 6" stroke="#2e8b2e" stroke-width="1.8" fill="none"/><path d="M7.8 0 V5.5 M10.2 0 V5.5 M6.6 1.7 H11.4 M6.6 3.9 H11.4" stroke="#2e8b2e" stroke-width="1.1"/></svg><span class="t" style="left:1193.5px;top:396px;color:#1e1e1e;transform:scaleX(1.0261);transform-origin:0 0;">MainActivity.cs</span><div style="left:1123px;top:491px;width:100px;height:20px;background:#ffffff;"></div><span class="t" style="left:1128.9px;top:493px;color:#1e1e1e;transform:scaleX(0.9740);transform-origin:0 0;">Solution Explorer</span><div style="left:1223px;top:491px;width:86px;height:20px;background:#4d6082;"></div><span class="t" style="left:1230px;top:493px;color:#ffffff;transform:scaleX(0.9553);transform-origin:0 0;">Team Explorer</span><div style="left:1123px;top:517px;width:375px;height:432px;background:#8e9bbc;"></div><div style="left:1123px;top:517px;width:375px;height:1px;background:#8e9bbc;"></div><div style="left:1124px;top:518px;width:373px;height:21px;background:#4d6082;"></div><span class="t" style="left:1128.2px;top:521px;color:#ffffff;transform:scaleX(0.9582);transform-origin:0 0;">Properties</span><svg style="position:absolute;left:1449px;top:526px;" width="8" height="5" viewBox="0 0 8 5"><path d="M0 0 H8 L4 4.5 Z" fill="#e6e9f0"/></svg><svg style="position:absolute;left:1466px;top:522px;" width="8" height="12" viewBox="0 0 8 12"><path d="M2 0.5 V6.5 M1.5 0.5 H6 M5.5 0.5 V6.5 M0 6.5 H8 M4 6.5 V12" stroke="#e6e9f0" stroke-width="1.1" fill="none"/><rect x="2" y="1" width="1.6" height="5.5" fill="#e6e9f0"/></svg><svg style="position:absolute;left:1481px;top:524px;" width="10" height="9" viewBox="0 0 10 9"><path d="M0.6 0.6 L9.4 8.4 M9.4 0.6 L0.6 8.4" stroke="#e6e9f0" stroke-width="1.3"/></svg><div style="left:1124px;top:539px;width:373px;height:409px;background:#ffffff;"></div><svg style="position:absolute;left:1487px;top:550px;" width="6" height="4" viewBox="0 0 6 4"><path d="M0 0 H6 L3 3.5 Z" fill="#1e1e1e"/></svg><div style="left:1125px;top:564px;width:371px;height:25px;background:#cfd6e5;"></div><div style="left:1127px;top:565px;width:23px;height:22px;background:#fff5c8;border:1px solid #e8c469;"></div><svg style="position:absolute;left:1131px;top:569px;" width="15" height="15" viewBox="0 0 15 15"><rect x="0" y="0" width="5" height="5" fill="#222"/><path d="M2.5 1 V4 M1 2.5 H4" stroke="#fff" stroke-width="0.9"/><rect x="0" y="9" width="5" height="5" fill="#222"/><path d="M2.5 10 V13 M1 11.5 H4" stroke="#fff" stroke-width="0.9"/><rect x="6" y="0" width="5" height="1" fill="#222"/><rect x="6" y="2" width="5" height="1" fill="#222"/><rect x="6" y="4" width="5" height="1" fill="#222"/><rect x="6" y="6" width="5" height="1" fill="#222"/><rect x="6" y="8" width="5" height="1" fill="#222"/><rect x="6" y="11" width="5" height="1" fill="#222"/><rect x="6" y="13" width="5" height="1" fill="#222"/><rect x="12" y="2" width="2" height="1" fill="#222"/><rect x="12" y="4" width="2" height="1" fill="#222"/><rect x="12" y="6" width="2" height="1" fill="#222"/><rect x="12" y="8" width="2" height="1" fill="#222"/><rect x="12" y="13" width="2" height="1" fill="#222"/></svg><svg style="position:absolute;left:1154px;top:569px;" width="15" height="15" viewBox="0 0 15 15"><rect x="0" y="0" width="7" height="7" fill="#222"/><path d="M1.8 6 L3.5 1.3 L5.2 6 M2.4 4.5 H4.6" stroke="#fff" stroke-width="1" fill="none"/><path d="M1 9 H6 L1 13.5 H6" stroke="#222" stroke-width="1.5" fill="none"/><path d="M11 3.5 V12" stroke="#0a4aa8" stroke-width="1.8"/><path d="M8 9.5 L11 13.2 L14 9.5" stroke="#0a4aa8" stroke-width="1.8" fill="none"/></svg><div style="left:1176px;top:567px;width:1px;height:20px;background:#a6aec1;"></div><svg style="position:absolute;left:1184px;top:569px;" width="13" height="13" viewBox="0 0 13 13"><path d="M1.5 11.5 L6.5 6.5" stroke="#a0a4b0" stroke-width="2.6"/><circle cx="8.5" cy="4.5" r="3.8" fill="#a0a4b0"/><rect x="8.5" y="0" width="3" height="3.2" transform="rotate(45 10 1.6)" fill="#cfd6e5"/></svg><div style="left:1124px;top:885px;width:373px;height:1px;background:#e6e6e6;"></div><span class="t" style="left:4.7px;top:959px;color:#ffffff;transform:scaleX(0.9081);transform-origin:0 0;">Ready</span><svg style="position:absolute;left:1488px;top:964px;" width="12" height="10" viewBox="0 0 12 10"><rect x="9" y="1" width="1" height="1" fill="#00508a"/><rect x="10" y="2" width="1" height="1" fill="#a9d3f2"/><rect x="7" y="3" width="1" height="1" fill="#00508a"/><rect x="8" y="4" width="1" height="1" fill="#a9d3f2"/><rect x="9" y="3" width="1" height="1" fill="#00508a"/><rect x="10" y="4" width="1" height="1" fill="#a9d3f2"/><rect x="5" y="5" width="1" height="1" fill="#00508a"/><rect x="6" y="6" width="1" height="1" fill="#a9d3f2"/><rect x="7" y="5" width="1" height="1" fill="#00508a"/><rect x="8" y="6" width="1" height="1" fill="#a9d3f2"/><rect x="9" y="5" width="1" height="1" fill="#00508a"/><rect x="10" y="6" width="1" height="1" fill="#a9d3f2"/><rect x="3" y="7" width="1" height="1" fill="#00508a"/><rect x="4" y="8" width="1" height="1" fill="#a9d3f2"/><rect x="5" y="7" width="1" height="1" fill="#00508a"/><rect x="6" y="8" width="1" height="1" fill="#a9d3f2"/><rect x="7" y="7" width="1" height="1" fill="#00508a"/><rect x="8" y="8" width="1" height="1" fill="#a9d3f2"/><rect x="9" y="7" width="1" height="1" fill="#00508a"/><rect x="10" y="8" width="1" height="1" fill="#a9d3f2"/></svg>
</body></html>
